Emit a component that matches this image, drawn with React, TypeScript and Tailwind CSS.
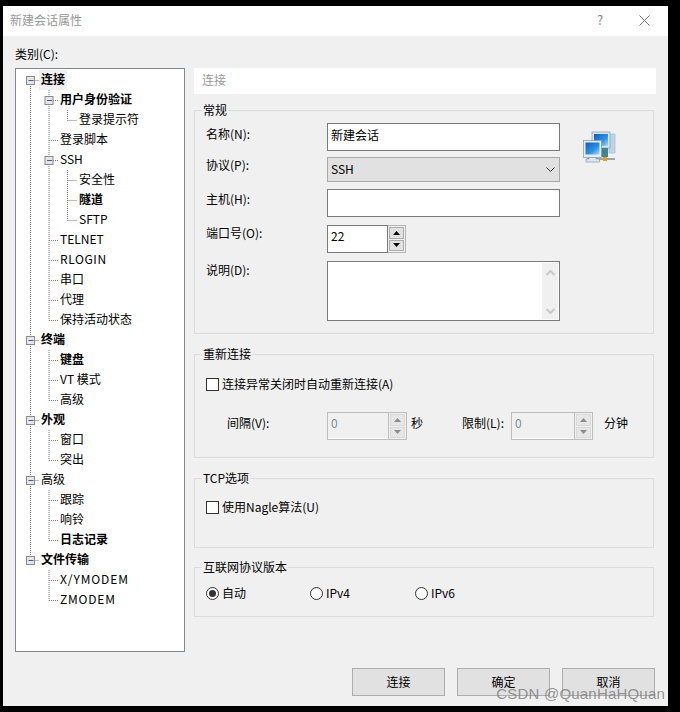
import React from "react";

const FONT = "font-['Noto_Sans_CJK_SC','Noto_Sans',sans-serif]";

type Row = { t: string; l: 0 | 1 | 2; b?: boolean; exp?: boolean; last?: boolean; noRoot?: boolean; first?: boolean; sel?: boolean; track?: string };

const rows: Row[] = [
  { t: "连接", l: 0, b: true, exp: true, first: true, sel: true },
  { t: "用户身份验证", l: 1, b: true, exp: true },
  { t: "登录提示符", l: 2, last: true },
  { t: "登录脚本", l: 1 },
  { t: "SSH", l: 1, exp: true },
  { t: "安全性", l: 2 },
  { t: "隧道", l: 2, b: true },
  { t: "SFTP", l: 2, last: true },
  { t: "TELNET", l: 1 },
  { t: "RLOGIN", l: 1, track: "tracking-[0.6px]" },
  { t: "串口", l: 1 },
  { t: "代理", l: 1 },
  { t: "保持活动状态", l: 1, last: true },
  { t: "终端", l: 0, b: true, exp: true },
  { t: "键盘", l: 1, b: true },
  { t: "VT 模式", l: 1 },
  { t: "高级", l: 1, last: true },
  { t: "外观", l: 0, b: true, exp: true },
  { t: "窗口", l: 1 },
  { t: "突出", l: 1, last: true },
  { t: "高级", l: 0, exp: true },
  { t: "跟踪", l: 1 },
  { t: "响铃", l: 1 },
  { t: "日志记录", l: 1, b: true, last: true },
  { t: "文件传输", l: 0, b: true, exp: true, last: true },
  { t: "X/YMODEM", l: 1, noRoot: true, track: "tracking-[0.9px]" },
  { t: "ZMODEM", l: 1, noRoot: true, last: true, track: "tracking-[0.8px]" },
];

const COL = [14.5, 33, 51.5];

function Guide({ r }: { r: Row }) {
  const x = COL[r.l];
  const dots = { stroke: "#7d7d7d", strokeWidth: 1, strokeDasharray: "1 1", fill: "none" };
  return (
    <svg width={r.l === 0 ? 23 : r.l === 1 ? 42 : 61} height={20} className="shrink-0">
      {r.l > 0 && !r.noRoot && <line x1={COL[0]} x2={COL[0]} y1={0} y2={20} {...dots} />}
      {r.l === 2 && <line x1={COL[1]} x2={COL[1]} y1={0} y2={20} {...dots} />}
      <line x1={x} x2={x} y1={r.first ? 10 : 0} y2={r.last ? 10.5 : 20} {...dots} />
      <line x1={x} x2={x + 9} y1={10.5} y2={10.5} {...dots} />
      {r.exp && (
        <g>
          <rect x={x - 4} y={6.5} width={8} height={8} fill="#e6e6e6" stroke="#8a8a8a" />
          <line x1={x - 2} x2={x + 3} y1={10.5} y2={10.5} stroke="#3f5aa6" />
        </g>
      )}
    </svg>
  );
}

function Tree() {
  return (
    <div className="w-[170px] h-[584px] shrink-0 bg-white border border-[#828790] pt-px overflow-hidden">
      {rows.map((r, i) => (
        <div key={i} className="flex h-5 items-center">
          <Guide r={r} />
          <span
            className={
              "h-5 leading-[18px] text-[12px] px-[2px] text-black whitespace-nowrap " +
              (r.b ? "font-bold " : "") +
              (r.track ? r.track + " " : "") +
              (r.sel ? "bg-[#f0f0f0]" : "")
            }
          >
            {r.t}
          </span>
        </div>
      ))}
    </div>
  );
}

function Group({ title, h, className, children }: { title: string; h: string; className?: string; children?: React.ReactNode }) {
  return (
    <div className={"relative w-[460px] border border-[#dcdcdc] " + h + " " + (className ?? "")}>
      <span className="absolute left-[7px] -top-[9px] px-px bg-[#f0f0f0] text-[12px] leading-4 text-black whitespace-nowrap">{title}</span>
      {children}
    </div>
  );
}

function Arrow({ up, color }: { up?: boolean; color: string }) {
  return (
    <svg width="7" height="4" viewBox="0 0 7 4">
      <path d={up ? "M3.5 0L7 4H0Z" : "M0 0H7L3.5 4Z"} fill={color} />
    </svg>
  );
}

function Spin({ value, disabled, w }: { value: string; disabled?: boolean; w: string }) {
  if (disabled) {
    return (
      <div className={"flex h-[28px] border border-[#bdbdbd] bg-[#f0f0f0] " + w}>
        <div className="flex-1 pl-[3px] leading-[20px] border-b border-white text-[12px] text-[#7f8a99]">{value}</div>
        <div className="flex flex-col w-[18px] gap-px border-l border-[#bdbdbd] p-px">
          <div className="flex-1 flex items-center justify-center bg-[#e6e6e6] border border-[#d9d9d9]"><Arrow up color="#8c8c8c" /></div>
          <div className="flex-1 flex items-center justify-center bg-[#e6e6e6] border border-[#d9d9d9]"><Arrow color="#8c8c8c" /></div>
        </div>
      </div>
    );
  }
  return (
    <div className={"flex h-[28px] " + w}>
      <div className="flex-1 border border-[#7a7a7a] bg-white pl-[3px] leading-[20px] text-[12px] text-black">{value}</div>
      <div className="flex flex-col w-[18px] gap-px border border-l-0 border-[#b4b4b4] p-px">
        <div className="flex-1 flex items-center justify-center bg-[#e1e1e1] border border-[#adadad]"><Arrow up color="#000" /></div>
        <div className="flex-1 flex items-center justify-center bg-[#e1e1e1] border border-[#adadad]"><Arrow color="#000" /></div>
      </div>
    </div>
  );
}

function Field({ label, h, gap, pad, children }: { label: string; h: string; gap: string; pad?: string; children: React.ReactNode }) {
  return (
    <div className={"flex items-start " + h + " " + gap}>
      <span className={"w-[121px] shrink-0 text-[12px] leading-4 text-black " + (pad ?? "")}>{label}</span>
      {children}
    </div>
  );
}

function Check({ label, className }: { label: string; className?: string }) {
  return (
    <div className={"flex items-center gap-[3px] " + (className ?? "")}>
      <div className="w-[13px] h-[13px] bg-white border border-[#333333]" />
      <span className="text-[12px] leading-4 text-black">{label}</span>
    </div>
  );
}

function Radio({ label, on, w }: { label: string; on?: boolean; w?: string }) {
  return (
    <div className={"flex items-center gap-[3px] " + (w ?? "")}>
      <div className="w-[13px] h-[13px] rounded-full bg-white border border-[#333333] flex items-center justify-center">
        {on && <div className="w-[7px] h-[7px] rounded-full bg-[#333333]" />}
      </div>
      <span className="text-[12px] leading-4 text-black">{label}</span>
    </div>
  );
}

function NetIcon() {
  return (
    <svg width="34" height="34" viewBox="0 0 34 34" className="shrink-0">
      <defs>
        <linearGradient id="scr" x1="0" y1="0" x2="1" y2="1">
          <stop offset="0" stopColor="#0f5cc4" />
          <stop offset="0.6" stopColor="#2f92e4" />
          <stop offset="1" stopColor="#a9dcf5" />
        </linearGradient>
      </defs>
      <rect x="27" y="3" width="6" height="19" fill="#c3d2e2" stroke="#9fb3c8" strokeWidth="0.6" />
      <rect x="10" y="1" width="18" height="16" fill="#d8e6f3" stroke="#7f98b2" strokeWidth="0.7" />
      <rect x="12" y="3" width="14" height="12" fill="url(#scr)" />
      <rect x="16" y="17" width="10" height="9" fill="#3f8494" />
      <path d="M5 28H33" stroke="#93a6b8" strokeWidth="2" />
      <rect x="1.5" y="9.5" width="18" height="17" fill="#e4eef7" stroke="#7f98b2" strokeWidth="0.7" />
      <rect x="3.5" y="11.5" width="14" height="12" fill="url(#scr)" />
      <path d="M7 26.5h7v1.500h3.500v3H4v-3h3z" fill="#dfe6ee" stroke="#8599ad" strokeWidth="0.7" />
      <rect x="21" y="26" width="4" height="4" fill="#f09a10" />
    </svg>
  );
}

export default function App() {
  return (
    <div className={"w-[680px] h-[712px] bg-black overflow-hidden pt-[6px] pl-[3px] " + FONT}>
      <div className="relative w-[665px] h-[700px] bg-[#f0f0f0]">
        <div className="flex items-center h-[30px] bg-white pl-[7px] pb-[2px] text-[12px] text-[#999999]">
          <span className="flex-1">新建会话属性</span>
          <span className="w-[20px] text-center text-[13px] text-[#888888] mr-[29px]">?</span>
          <svg width="11" height="11" viewBox="0 0 11 11" className="mr-[18px]">
            <path d="M0.5 0.5L10.5 10.5M10.5 0.5L0.5 10.5" stroke="#777" strokeWidth="1" fill="none" />
          </svg>
        </div>
        <div className="h-[32px] pl-[12px] pt-[10px] text-[12px] leading-4 text-black">类别(C):</div>
        <div className="flex pl-[12px] gap-[9px]">
          <Tree />
          <div className="flex flex-col w-[462px]">
            <div className="h-[26px] bg-white pl-[8px] text-[12px] leading-[24px] text-[#999999]">连接</div>
            <Group title="常规" h="h-[224px]" className="mt-4">
              <div className="flex pl-[11px] pt-[12px]">
                <div className="flex flex-col w-[354px]">
                  <Field label="名称(N):" h="h-[28px]" gap="mb-[6px]" pad="pt-[3px]">
                    <div className="w-[233px] h-[28px] border border-[#7a7a7a] bg-white pl-[3px] text-[12px] leading-[22px] text-black">新建会话</div>
                  </Field>
                  <Field label="协议(P):" h="h-[25px]" gap="mb-[7px]">
                    <div className="flex items-center justify-between w-[233px] h-[25px] border border-[#a9a9a9] bg-[#e1e1e1] pl-[3px] pr-[4px] text-[12px] text-black">
                      <span className="pb-[2px]">SSH</span>
                      <svg width="9" height="6" viewBox="0 0 9 6"><path d="M0.5 0.5L4.5 4.5L8.5 0.5" stroke="#333" fill="none" /></svg>
                    </div>
                  </Field>
                  <Field label="主机(H):" h="h-[28px]" gap="mb-[8px]" pad="pt-[2px]">
                    <div className="w-[233px] h-[28px] border border-[#7a7a7a] bg-white" />
                  </Field>
                  <Field label="端口号(O):" h="h-[28px]" gap="mb-[8px]">
                    <Spin value="22" w="w-[79px]" />
                  </Field>
                  <Field label="说明(D):" h="h-[60px]" gap="" pad="pt-px">
                    <div className="flex justify-end w-[233px] h-[60px] border border-[#7a7a7a] bg-white p-px">
                      <div className="flex flex-col items-center justify-between w-[16px] pt-[7px] pb-[5px] bg-[#f0f0f0]">
                        <svg width="9" height="6" viewBox="0 0 9 6"><path d="M0.5 5L4.5 1L8.5 5" stroke="#c8c8c8" strokeWidth="2" fill="none" /></svg>
                        <svg width="9" height="6" viewBox="0 0 9 6"><path d="M0.5 1L4.5 5L8.5 1" stroke="#c8c8c8" strokeWidth="2" fill="none" /></svg>
                      </div>
                    </div>
                  </Field>
                </div>
                <div className="pl-[22px] pt-[8px]"><NetIcon /></div>
              </div>
            </Group>
            <Group title="重新连接" h="h-[104px]" className="mt-5">
              <Check label="连接异常关闭时自动重新连接(A)" className="ml-[11px] mt-[21px]" />
              <div className="flex items-center mt-[20px] text-[12px] text-black">
                <span className="w-[100px] ml-[32px] pb-[6px]">间隔(V):</span>
                <Spin value="0" disabled w="w-[80px]" />
                <span className="ml-[4px] w-[51px] pb-[6px]">秒</span>
                <span className="w-[49px] pb-[6px]">限制(L):</span>
                <Spin value="0" disabled w="w-[82px]" />
                <span className="ml-[11px] pb-[6px]">分钟</span>
              </div>
            </Group>
            <Group title="TCP选项" h="h-[70px]" className="mt-5">
              <Check label="使用Nagle算法(U)" className="ml-[11px] mt-[20px]" />
            </Group>
            <Group title="互联网协议版本" h="h-[50px]" className="mt-[19px]">
              <div className="flex ml-[11px] mt-[17px]">
                <Radio label="自动" on w="w-[104px]" />
                <Radio label="IPv4" w="w-[105px]" />
                <Radio label="IPv6" />
              </div>
            </Group>
          </div>
        </div>
        <div className="flex justify-end gap-3 mt-4 pr-[13px]">
          {["连接", "确定", "取消"].map((b) => (
            <div key={b} className="flex items-center justify-center w-[93px] h-[28px] bg-[#e1e1e1] border border-[#adadad] text-[12px] text-black">{b}</div>
          ))}
        </div>
        <span className="absolute right-[3px] bottom-[2px] font-['Liberation_Sans',sans-serif] text-[15px] tracking-[0.2px] leading-5 text-[#7a7a7a]/80 whitespace-nowrap">CSDN @QuanHaHQuan</span>
      </div>
    </div>
  );
}
